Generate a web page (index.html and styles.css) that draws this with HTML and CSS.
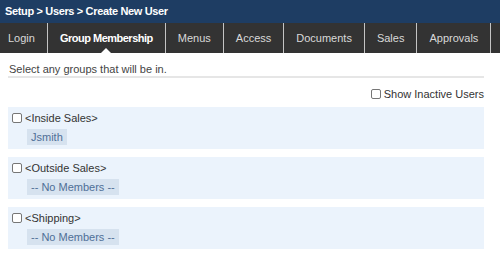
FILE: index.html
```html
<!DOCTYPE html>
<html lang="en">
<head>
    <meta charset="UTF-8">
    <title>Create New User</title>
    <link rel="stylesheet" href="styles.css">
</head>
<body>

    <div class="crumb">Setup &gt; Users &gt; Create New User</div>

    <nav class="tabs">
        <a class="tab first">Login</a>
        <a class="tab active">Group Membership</a>
        <a class="tab">Menus</a>
        <a class="tab">Access</a>
        <a class="tab">Documents</a>
        <a class="tab">Sales</a>
        <a class="tab">Approvals</a>
    </nav>

    <div class="content">
        <div class="intro">Select any groups that will be in.</div>

        <div class="options">
            <label><input type="checkbox" class="check"> Show Inactive Users</label>
        </div>

        <div class="group">
            <label class="group-name"><input type="checkbox" class="check">&lt;Inside Sales&gt;</label>
            <div class="members">
                <span class="member">Jsmith</span>
            </div>
        </div>

        <div class="group">
            <label class="group-name"><input type="checkbox" class="check">&lt;Outside Sales&gt;</label>
            <div class="members">
                <span class="member">-- No Members --</span>
            </div>
        </div>

        <div class="group">
            <label class="group-name"><input type="checkbox" class="check">&lt;Shipping&gt;</label>
            <div class="members">
                <span class="member">-- No Members --</span>
            </div>
        </div>
    </div>

</body>
</html>
```

FILE: styles.css
```css
* {
    box-sizing: border-box;
}

body {
    margin: 0;
    font-family: "Liberation Sans", Arial, sans-serif;
    font-size: 11px;
    color: #333;
    background-color: #ffffff;
}

.crumb {
    height: 23px;
    line-height: 22px;
    padding-left: 5px;
    background-color: #1e3d63;
    color: #ffffff;
    font-weight: bold;
    letter-spacing: -0.35px;
}

.tabs {
    display: flex;
    height: 30px;
    background-color: #333333;
}

.tab {
    position: relative;
    display: flex;
    align-items: center;
    padding: 0 12px;
    border-right: 1px solid #c4c4c4;
    color: #d9d9d9;
    cursor: pointer;
}

.tab.first {
    padding-left: 8px;
}

.tab.active {
    color: #ffffff;
    font-weight: bold;
    letter-spacing: -0.5px;
}

/* little notch under the selected tab */
.tab.active::after {
    content: "";
    position: absolute;
    bottom: 0;
    left: 50%;
    margin-left: -5px;
    border-left: 5px solid transparent;
    border-right: 5px solid transparent;
    border-bottom: 5px solid #ffffff;
}

.content {
    padding: 0 16px 0 8px;
}

.intro {
    padding: 10px 0 0 1px;
    line-height: 13px;
    color: #444;
    border-bottom: 2px solid #e6e6e6;
}

.options {
    display: flex;
    justify-content: flex-end;
    margin-top: 9px;
    line-height: 14px;
}

.options label {
    display: flex;
    align-items: center;
}

.check {
    appearance: none;
    width: 10px;
    height: 10px;
    margin: 0 3px 0 0;
    border: 1px solid #767676;
    border-radius: 2px;
    background-color: #ffffff;
}

.group {
    margin-top: 8px;
    padding: 4px 4px 4px 4px;
    background-color: #ebf3fc;
}

.options + .group {
    margin-top: 6px;
}

.group-name {
    display: flex;
    align-items: center;
    line-height: 14px;
}

.members {
    display: flex;
    margin-top: 4px;
    padding-left: 15px;
}

.member {
    padding: 1px 4px;
    line-height: 14px;
    background-color: #d6e2ef;
    color: #4f6f97;
}
```
